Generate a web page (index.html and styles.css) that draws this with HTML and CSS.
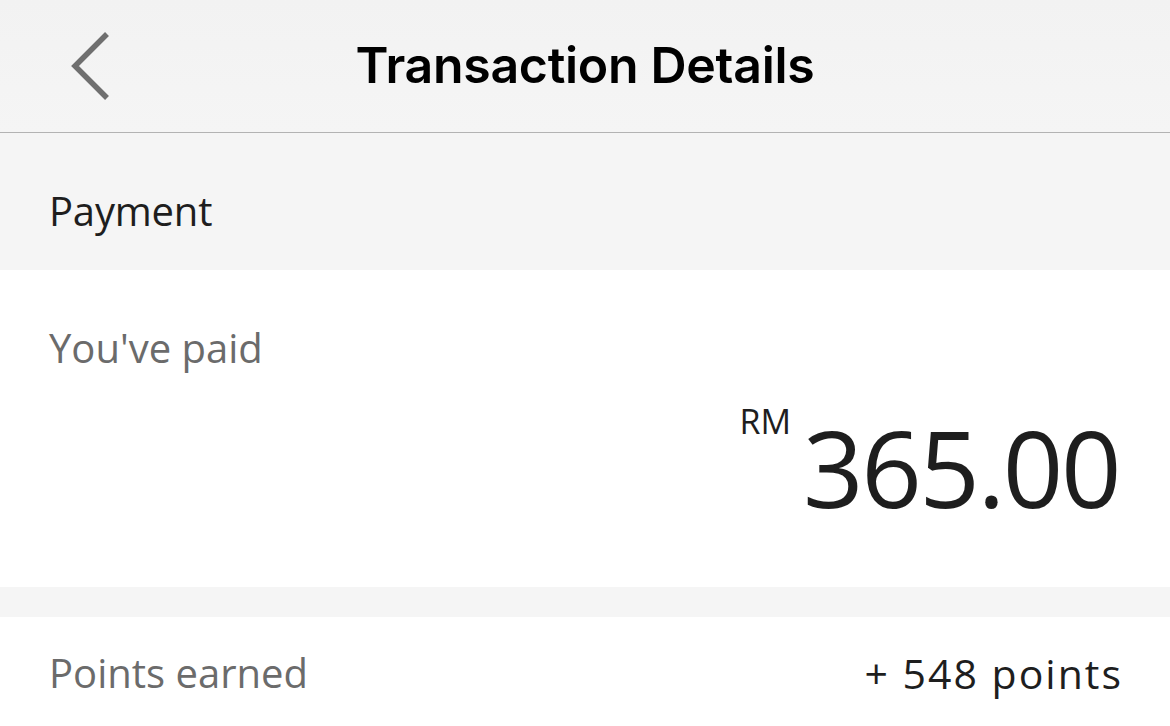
FILE: index.html
```html
<!DOCTYPE html>
<html>
<head>
<meta charset="utf-8">
<link rel="stylesheet" href="styles.css">
</head>
<body>
<div class="page">
  <header class="nav">
    <div class="back">
      <svg width="48" height="72" viewBox="0 0 48 72"><polyline points="38,4 6,36 38,68" fill="none" stroke="#6f6f6f" stroke-width="5.5" stroke-linecap="butt" stroke-linejoin="miter"/></svg>
    </div>
    <h1 class="title">Transaction Details</h1>
  </header>
  <section class="section-head">Payment</section>
  <section class="paid">
    <div class="label">You've paid</div>
    <div class="amount"><span class="cur">RM</span><span class="value">365.00</span></div>
  </section>
  <div class="spacer"></div>
  <section class="row">
    <span class="label">Points earned</span>
    <span class="points">+ 548 points</span>
  </section>
</div>
</body>
</html>
```
FILE: styles.css
```css
html, body { margin: 0; padding: 0; }
body { background: #fff; font-family: "Open Sans", "Noto Sans", sans-serif; width: 1170px; height: 726px; overflow: hidden; }
.page { display: flex; flex-direction: column; }
.nav { height: 132px; border-bottom: 1px solid #b3b3b3; background: linear-gradient(#f2f2f2, #f5f5f5); position: relative; display: flex; align-items: center; justify-content: center; }
.back { position: absolute; left: 69px; top: 30px; width: 48px; height: 72px; }
.title { margin: 0; font-family: Inter, "Liberation Sans", sans-serif; font-weight: 600; font-size: 50px; color: #000; letter-spacing: -0.3px; margin-top: -2px; }
.section-head { height: 137px; background: #f5f5f5; padding: 51px 0 0 49px; font-size: 40px; line-height: 54px; color: #1e1e1e; box-sizing: border-box; letter-spacing: -0.2px; }
.paid { height: 317px; background: #fff; padding: 51px 51px 0 49px; box-sizing: border-box; display: flex; flex-direction: column; }
.label { font-size: 40px; line-height: 54px; color: #6b6b6b; }
.amount { display: flex; justify-content: flex-end; align-items: flex-start; margin-top: 29px; color: #1e1e1e; }
.cur { font-size: 34px; line-height: 1; margin-right: 12px; }
.value { font-size: 106px; line-height: 1; letter-spacing: -2.5px; margin-top: 10px; }
.spacer { height: 30px; background: #f5f5f5; }
.row { display: flex; justify-content: space-between; align-items: flex-start; padding: 29px 47px 0 49px; }
.points { font-size: 41px; line-height: 54px; color: #1e1e1e; letter-spacing: 2px; }
```
